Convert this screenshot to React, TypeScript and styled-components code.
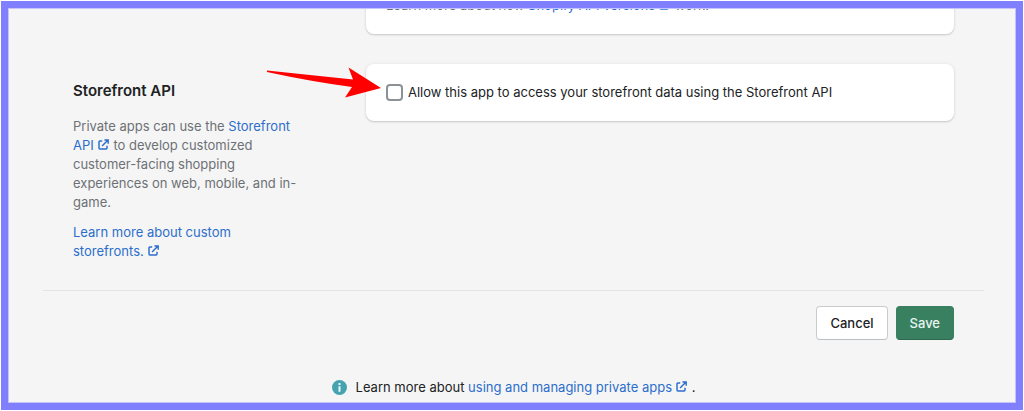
import React from 'react';
import styled, { createGlobalStyle } from 'styled-components';

const GlobalStyle = createGlobalStyle`
  *, *::before, *::after { box-sizing: border-box; }
  body {
    margin: 0;
    background: #fff;
    color: #202223;
    font-family: Inter, "Liberation Sans", sans-serif;
    font-size: 13px;
    line-height: 19px;
  }
`;

const Frame = styled.div`
  height: 100vh;
  border: 1px solid #fff;
  padding: 7px;
  background: #8080ff;
`;

/* The settings page is longer than the frame and rests at its end. */
const Viewport = styled.div`
  height: 100%;
  display: flex;
  flex-direction: column;
  justify-content: flex-end;
  overflow: hidden;
  border: 1px solid #c4c4fb;
  background: #f5f5f5;
`;

const Page = styled.main`
  flex: none;
  padding: 0 31px 5px 34px;
`;

const Section = styled.section`
  display: grid;
  grid-template-columns: 225px minmax(0, 1fr);
  column-gap: 68px;
  align-items: start;
  padding: 0 30px;
  margin-top: 30px;
`;

const Annotation = styled.div`
  padding-top: 17px;
`;

const Heading = styled.h2`
  margin: 0 0 16px;
  font-size: 15px;
  line-height: 20px;
  font-weight: 600;
`;

const Copy = styled.p`
  margin: 0 0 11px;
  color: #6d7175;
  &:last-child { margin-bottom: 0; }
`;

const Card = styled.div`
  position: relative;
  grid-column: 2;
  padding: 19px 20px;
  border-radius: 8px;
  background: #fff;
  box-shadow: 0 0 4px rgba(23, 24, 24, 0.06), 0 1px 2px rgba(0, 0, 0, 0.16);
`;

const Link = styled.a`
  color: #2c6ecb;
  text-decoration: none;
  &:hover { text-decoration: underline; }
`;

const LinkIcon = styled.svg`
  width: 11px;
  height: 11px;
  margin: 0 1px 0 4px;
  vertical-align: 0;
`;

const CheckLabel = styled.label`
  display: flex;
  align-items: center;
  gap: 5px;
`;

const Checkbox = styled.input`
  appearance: none;
  flex: none;
  width: 17px;
  height: 17px;
  margin: 0;
  border: 2px solid #8c9196;
  border-radius: 4px;
  background: #fff;
  &:checked { background: #388060; border-color: #388060; }
`;

const Arrow = styled.svg`
  position: absolute;
  top: 2px;
  left: -100px;
  width: 116px;
  height: 34px;
  pointer-events: none;
`;

const Actions = styled.div`
  display: flex;
  justify-content: flex-end;
  gap: 8px;
  margin-top: 29px;
  padding: 15px 30px 0;
  border-top: 1px solid #e3e4e5;
`;

const Button = styled.button<{ $primary?: boolean }>`
  height: 34px;
  padding: 0 13px;
  border: 1px solid ${(p) => (p.$primary ? '#388060' : '#c9cccf')};
  border-bottom-color: ${(p) => (p.$primary ? '#2d6a50' : '#babfc3')};
  border-radius: 4px;
  background: ${(p) => (p.$primary ? '#388060' : '#fff')};
  color: ${(p) => (p.$primary ? '#e9f5ef' : '#202223')};
  font: inherit;
  font-weight: 500;
`;

const Help = styled.footer`
  display: flex;
  justify-content: center;
  align-items: center;
  gap: 9px;
  margin-top: 38px;
`;

const InfoIcon = styled.svg`
  width: 15px;
  height: 15px;
`;

const External = () => (
  <LinkIcon viewBox="0 0 12 12" fill="none" stroke="currentColor" strokeWidth="1.6" aria-hidden="true">
    <path d="M4.6 2.2H2.1a1 1 0 0 0-1 1v6.7a1 1 0 0 0 1 1h6.7a1 1 0 0 0 1-1V7.4" />
    <path d="M4.4 7.6l6-6M7 1h4.1v4.1" />
  </LinkIcon>
);

export default function App() {
  return (
    <>
      <GlobalStyle />
      <Frame>
        <Viewport>
          <Page>
            <Section>
              <Card>
                <Copy>
                  Learn more about how <Link href="#versions">Shopify API versions<External /></Link> work.
                </Copy>
              </Card>
            </Section>
            <Section>
              <Annotation>
                <Heading>Storefront API</Heading>
                <Copy>
                  Private apps can use the <Link href="#storefront">Storefront API<External /></Link> to develop
                  customized customer-facing shopping experiences on web, mobile, and in-game.
                </Copy>
                <Copy>
                  <Link href="#custom">Learn more about custom storefronts.<External /></Link>
                </Copy>
              </Annotation>
              <Card>
                <CheckLabel>
                  <Checkbox type="checkbox" />
                  Allow this app to access your storefront data using the Storefront API
                </CheckLabel>
                <Arrow viewBox="0 0 116 34" aria-hidden="true">
                  <path d="M1 4.5L87 13.5L82.500 1.500L115 22L79 31.500L86 21Q45 15.500 1 6Z" fill="#f00" />
                </Arrow>
              </Card>
            </Section>
            <Actions>
              <Button type="button">Cancel</Button>
              <Button type="submit" $primary>Save</Button>
            </Actions>
            <Help>
              <InfoIcon viewBox="0 0 15 15" aria-hidden="true">
                <circle cx="7.500" cy="7.500" r="7.500" fill="#44a3ae" />
                <path d="M6.500 3h2v2h-2zM6.500 6.200h2v5.600h-2z" fill="#eefafa" />
              </InfoIcon>
              <span>
                Learn more about <Link href="#managing">using and managing private apps<External /></Link> .
              </span>
            </Help>
          </Page>
        </Viewport>
      </Frame>
    </>
  );
}
